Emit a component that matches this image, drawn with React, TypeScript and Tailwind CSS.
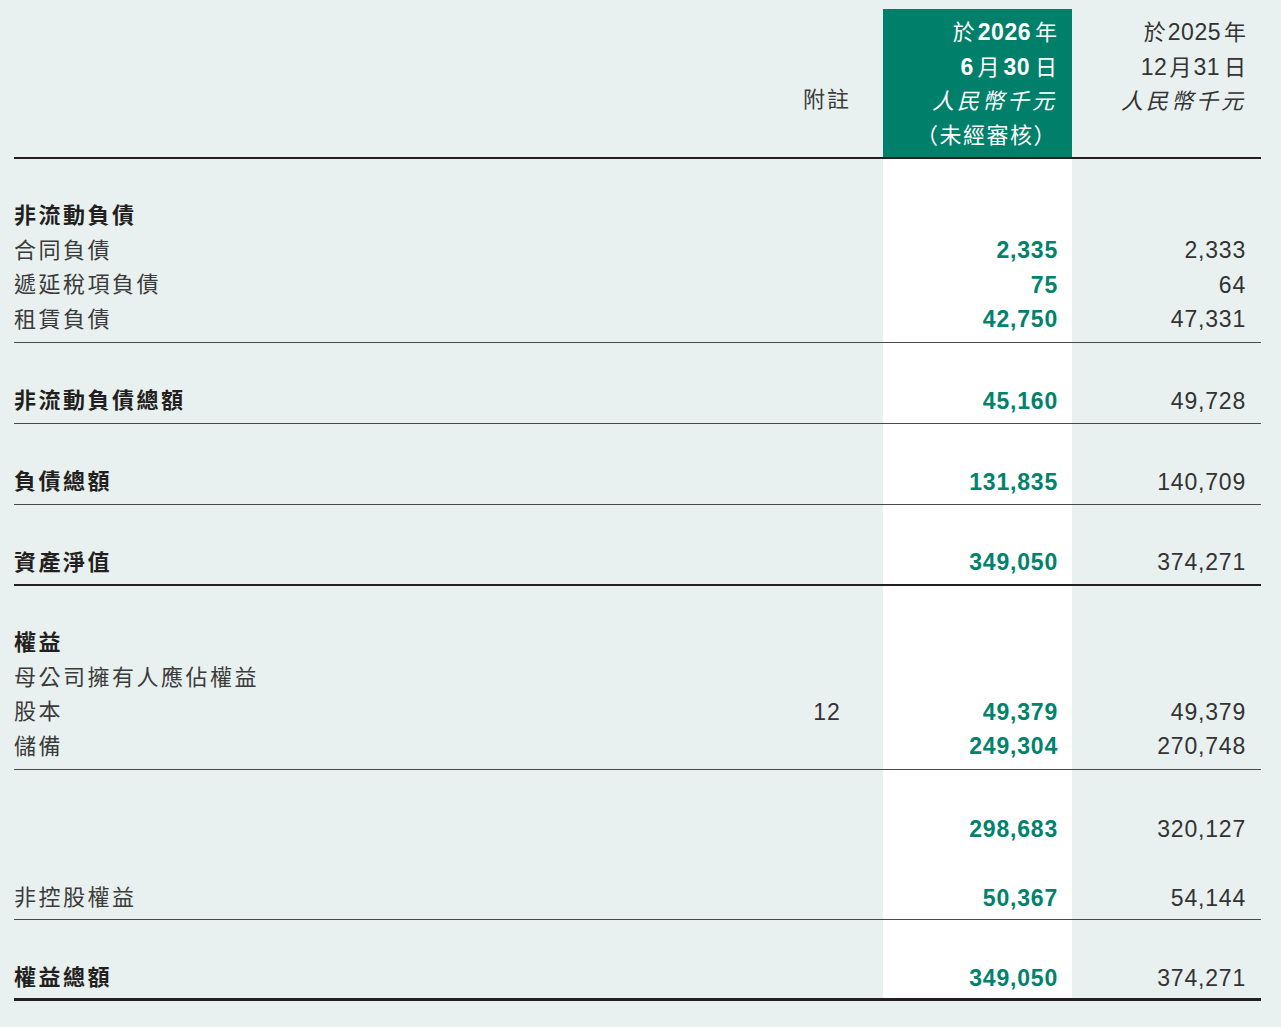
import React from "react";

const GRID = "grid grid-cols-[1fr_112px_189px_189px]";

type RowProps = {
  label?: string;
  note?: string;
  cur?: string;
  prev?: string;
  bold?: boolean;
};

function Spacer({ h }: { h: number }) {
  return (
    <div className={GRID} style={{ height: h }}>
      <div />
      <div />
      <div className="bg-white" />
      <div />
    </div>
  );
}

function Row({ label, note, cur, prev, bold }: RowProps) {
  return (
    <div className={`${GRID} h-[34.5px]`}>
      <div
        className={`flex items-center text-[22px] tracking-[2.5px] ${
          bold ? "font-bold text-[#231f20]" : "text-[#3b3b3b]"
        }`}
      >
        {label}
      </div>
      <div className="flex items-center justify-center text-[23px] tracking-[1px] text-[#333]">
        {note}
      </div>
      <div className="flex items-center justify-end bg-white pr-[14px] text-[23px] font-bold tracking-[0.8px] text-[#00826c]">
        {cur}
      </div>
      <div className="flex items-center justify-end pr-[15px] text-[23px] tracking-[0.8px] text-[#333]">
        {prev}
      </div>
    </div>
  );
}

function Section({
  top,
  bottom,
  heavy,
  children,
}: {
  top: number;
  bottom: number;
  heavy?: number;
  children: React.ReactNode;
}) {
  const border =
    heavy === 3
      ? "border-b-[3px] border-[#231f20]"
      : heavy === 2
      ? "border-b-2 border-[#231f20]"
      : "border-b border-[#4a4a4a]";
  return (
    <div className={border}>
      <Spacer h={top} />
      {children}
      <Spacer h={bottom} />
    </div>
  );
}

export default function App() {
  return (
    <div className="min-h-[1027px] bg-[#e8f1ef] pl-[14px] pr-[20px] pt-[9px] [font-family:'Liberation_Sans','Noto_Sans_CJK_TC',sans-serif]">
      {/* header */}
      <div className={`${GRID} h-[150px] border-b-2 border-[#231f20]`}>
        <div />
        <div className="pt-[74px] text-center text-[22px] leading-[34px] tracking-[2px] text-[#3b3b3b]">
          附註
        </div>
        <div className="bg-[#007f6a] pr-[15px] pt-[6px] text-right text-[22px] leading-[34px] text-white">
          <div>
            於<b className="ml-[3px] text-[23px] tracking-[0.5px]">2026</b>
            <span className="ml-[4px]">年</span>
          </div>
          <div>
            <b className="text-[23px]">6</b>
            <span className="ml-[4px]">月</span>
            <b className="ml-[4px] text-[23px] tracking-[0.5px]">30</b>
            <span className="ml-[5px]">日</span>
          </div>
          <div className="italic tracking-[3px]">人民幣千元</div>
          <div className="tracking-[1.5px]">（未經審核）</div>
        </div>
        <div className="pr-[15px] pt-[6px] text-right text-[22px] leading-[34px] text-[#333]">
          <div>
            於<span className="ml-[2px] text-[23px] tracking-[0.5px]">2025</span>
            <span className="ml-[3px]">年</span>
          </div>
          <div>
            <span className="text-[23px] tracking-[0.5px]">12</span>
            <span className="ml-[2px]">月</span>
            <span className="ml-[2px] text-[23px] tracking-[0.5px]">31</span>
            <span className="ml-[4px]">日</span>
          </div>
          <div className="italic tracking-[3px]">人民幣千元</div>
        </div>
      </div>

      <Section top={39.5} bottom={5.5}>
        <Row label="非流動負債" bold />
        <Row label="合同負債" cur="2,335" prev="2,333" />
        <Row label="遞延稅項負債" cur="75" prev="64" />
        <Row label="租賃負債" cur="42,750" prev="47,331" />
      </Section>

      <Section top={40.5} bottom={5}>
        <Row label="非流動負債總額" cur="45,160" prev="49,728" bold />
      </Section>

      <Section top={40.5} bottom={5}>
        <Row label="負債總額" cur="131,835" prev="140,709" bold />
      </Section>

      <Section top={40} bottom={4.5} heavy={2}>
        <Row label="資產淨值" cur="349,050" prev="374,271" bold />
      </Section>

      <Section top={39.5} bottom={5.5}>
        <Row label="權益" bold />
        <Row label="母公司擁有人應佔權益" />
        <Row label="股本" note="12" cur="49,379" prev="49,379" />
        <Row label="儲備" cur="249,304" prev="270,748" />
      </Section>

      <Section top={41.5} bottom={4}>
        <Row cur="298,683" prev="320,127" />
        <Row />
        <Row label="非控股權益" cur="50,367" prev="54,144" />
      </Section>

      <Section top={40.5} bottom={2.5} heavy={3}>
        <Row label="權益總額" cur="349,050" prev="374,271" bold />
      </Section>
    </div>
  );
}
